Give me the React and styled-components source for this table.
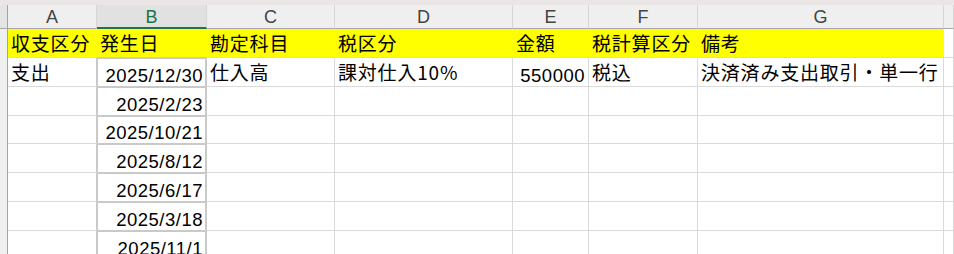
import React from "react";
import styled, { createGlobalStyle, css } from "styled-components";

const GlobalStyle = createGlobalStyle`
  html, body { margin: 0; padding: 0; background: #ffffff; }
  body { overflow: hidden; }
`;

const COLUMNS = [
  { key: "A", width: 89 },
  { key: "B", width: 110, active: true },
  { key: "C", width: 128 },
  { key: "D", width: 178 },
  { key: "E", width: 76 },
  { key: "F", width: 109 },
  { key: "G", width: 246 },
];

const ROW_HEIGHTS = [29, 29, 29, 28, 29, 29, 29, 29];

const HEADER_ROW = ["収支区分", "発生日", "勘定科目", "税区分", "金額", "税計算区分", "備考"];

const FIRST_ENTRY = [
  { text: "支出" },
  { text: "2025/12/30", num: true },
  { text: "仕入高" },
  { text: "課対仕入10%" },
  { text: "550000", num: true },
  { text: "税込" },
  { text: "決済済み支出取引・単一行" },
];

const MORE_DATES = ["2025/2/23", "2025/10/21", "2025/8/12", "2025/6/17", "2025/3/18", "2025/11/1"];

const Sheet = styled.div`
  width: 954px;
  height: 254px;
  overflow: hidden;
  display: flex;
  flex-direction: column;
  background: #ffffff;
`;

const TitleStrip = styled.div`
  height: 5px;
  flex: none;
  background: #ebe6e6;
`;

const Row = styled.div`
  display: flex;
  flex: none;
  height: ${(p) => p.$h}px;
`;

const RowHead = styled.div`
  flex: none;
  width: 8px;
  box-sizing: border-box;
  background: #efefef;
  border-right: 1px solid #a3a3a3;
  ${(p) =>
    p.$corner &&
    css`
      border-bottom: 1px solid #a8a8a8;
      background: #e4e4e4;
    `}
`;

const ColHead = styled.div`
  flex: ${(p) => (p.$w ? "none" : "1")};
  width: ${(p) => (p.$w ? `${p.$w}px` : "auto")};
  box-sizing: border-box;
  display: flex;
  align-items: center;
  justify-content: center;
  padding-top: ${(p) => (p.$active ? "3px" : "2px")};
  background: ${(p) => (p.$active ? "#e1e1e1" : "#efefef")};
  border-right: 1px solid #d6d6d6;
  border-bottom: ${(p) => (p.$active ? "2px solid #217346" : "1px solid #a8a8a8")};
  font-family: "Liberation Sans", Arial, sans-serif;
  font-size: 18px;
  color: ${(p) => (p.$active ? "#217346" : "#444444")};
`;

const Cell = styled.div`
  flex: ${(p) => (p.$w ? "none" : "1")};
  width: ${(p) => (p.$w ? `${p.$w}px` : "auto")};
  box-sizing: border-box;
  display: flex;
  align-items: flex-end;
  justify-content: ${(p) => (p.$num ? "flex-end" : "flex-start")};
  padding: 0 ${(p) => (p.$num ? "3px" : "0")} ${(p) => (p.$num ? "0" : "3px")}
    ${(p) => (p.$num ? "0" : "3px")};
  overflow: visible;
  white-space: nowrap;
  background: ${(p) => (p.$fill ? "#ffff00" : "#ffffff")};
  border-right: 1px solid ${(p) => (p.$edgeRight ? "#c9c9c9" : "#dadada")};
  border-bottom: 1px solid ${(p) => (p.$edgeBottom ? "#c9c9c9" : "#dadada")};
  font-family: ${(p) =>
    p.$num
      ? `"Liberation Sans", Arial, sans-serif`
      : `"Noto Sans CJK JP", "Noto Sans", sans-serif`};
  font-size: ${(p) => (p.$num ? "18.5px" : "19px")};
  letter-spacing: ${(p) => (p.$num ? "0.5px" : "0.8px")};
  line-height: ${(p) => (p.$num ? "20px" : "22px")};
  color: #000000;
  ${(p) =>
    p.$fill &&
    css`
      border-right-color: #ffff00;
    `}
  ${(p) =>
    p.$boxed &&
    css`
      border-right: 2px solid #c9c9c9;
      border-bottom: 1px solid #c9c9c9;
      box-shadow: inset 1px 1px 0 #c9c9c9;
      padding-right: 2px;
    `}
`;

function DataRow({ height, values, fill }) {
  return (
    <Row $h={height}>
      <RowHead />
      {COLUMNS.map((col, i) => {
        const v = values[i] || {};
        const isB = col.key === "B";
        return (
          <Cell
            key={col.key}
            $w={col.width}
            $num={v.num}
            $fill={fill}
            $boxed={!fill && isB}
            $edgeRight={!fill && col.key === "A"}
            $edgeBottom={fill && isB}
          >
            {v.text}
          </Cell>
        );
      })}
      <Cell />
    </Row>
  );
}

export default function App() {
  const rows = [
    { values: HEADER_ROW.map((text) => ({ text })), fill: true },
    { values: FIRST_ENTRY },
    ...MORE_DATES.map((d) => ({ values: [{}, { text: d, num: true }] })),
  ];

  return (
    <>
      <GlobalStyle />
      <Sheet>
        <TitleStrip />
        <Row $h={24}>
          <RowHead $corner />
          {COLUMNS.map((col) => (
            <ColHead key={col.key} $w={col.width} $active={col.active}>
              {col.key}
            </ColHead>
          ))}
          <ColHead />
        </Row>
        {rows.map((r, i) => (
          <DataRow key={i} height={ROW_HEIGHTS[i]} values={r.values} fill={r.fill} />
        ))}
      </Sheet>
    </>
  );
}
